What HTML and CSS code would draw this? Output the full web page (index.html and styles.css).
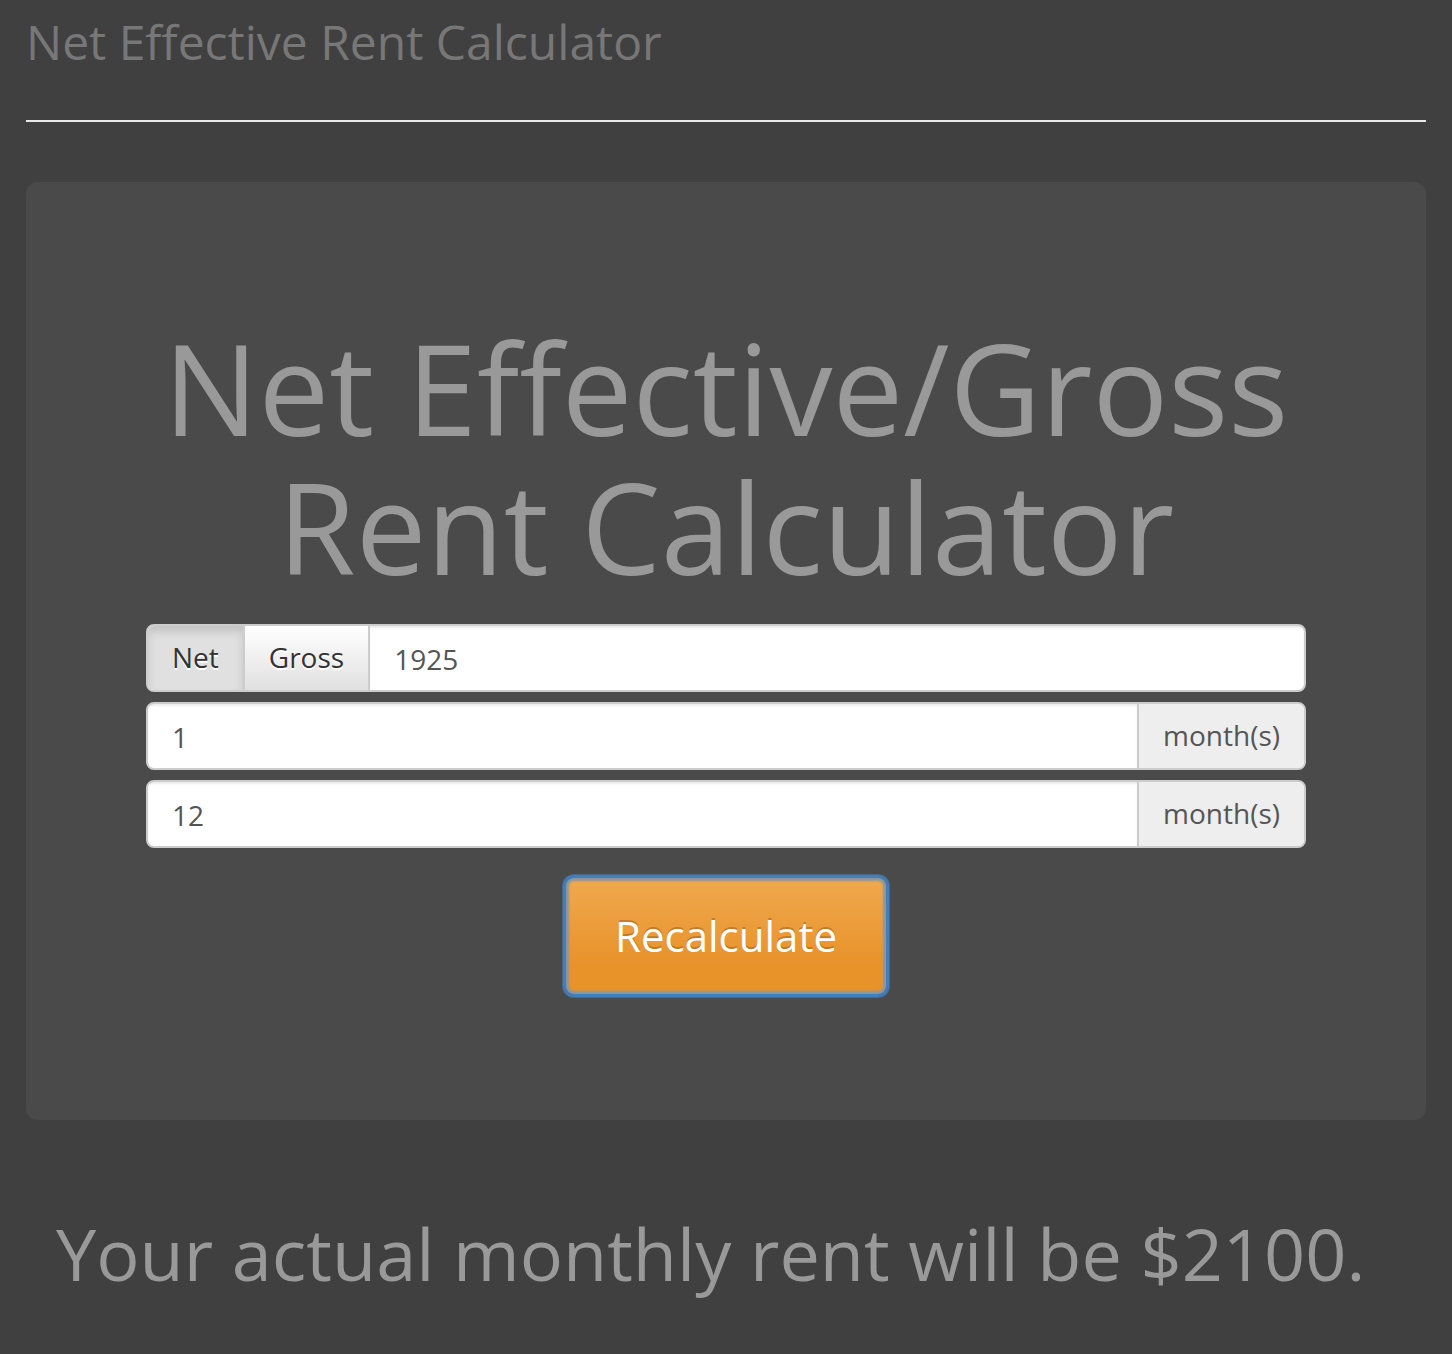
FILE: index.html
```html
<!DOCTYPE html>
<html lang="en">
<head>
<meta charset="utf-8">
<meta name="viewport" content="width=device-width, initial-scale=1">
<title>Net Effective Rent Calculator</title>
<link rel="stylesheet" href="styles.css">
</head>
<body>
<header class="masthead">
  <h3 class="brand">Net Effective Rent Calculator</h3>
</header>
<main>
  <form class="panel">
    <h1 class="title">Net Effective/Gross Rent Calculator</h1>
    <div class="fields">
      <div class="group">
        <button type="button" class="toggle active" aria-pressed="true">Net</button>
        <button type="button" class="toggle" aria-pressed="false">Gross</button>
        <input class="field" type="text" value="1925" aria-label="Monthly rent">
      </div>
      <div class="group">
        <input class="field" id="free" type="text" value="1">
        <label class="addon" for="free">month(s)</label>
      </div>
      <div class="group">
        <input class="field" id="term" type="text" value="12">
        <label class="addon" for="term">month(s)</label>
      </div>
    </div>
    <button type="button" class="submit">Recalculate</button>
  </form>
  <p class="result">Your actual monthly rent will be $2100.</p>
</main>
</body>
</html>
```
FILE: styles.css
```css
* {
  box-sizing: border-box;
}

body {
  margin: 0;
  padding: 0 26px;
  background: #404040;
  color: #999;
  font-family: "Open Sans", "Noto Sans", sans-serif;
  font-size: 28px;
}

.masthead {
  padding: 12px 0 48px;
  border-bottom: 2px solid #e8e8e8;
}

.brand {
  margin: 0;
  color: #777;
  font-size: 48px;
  font-weight: 400;
  line-height: 60px;
}

.panel {
  display: flex;
  flex-direction: column;
  align-items: center;
  margin: 60px 0;
  padding: 136px 120px 124px;
  border-radius: 12px;
  background: #4a4a4a;
}

.title {
  margin: 0 0 28px;
  font-size: 126px;
  font-weight: 400;
  line-height: 139px;
  text-align: center;
}

.fields {
  display: grid;
  gap: 10px;
  width: 100%;
  margin-bottom: 28px;
}

.group {
  display: flex;
  height: 68px;
  overflow: hidden;
  border: 2px solid #ccc;
  border-radius: 8px;
  background: #fff;
}

.toggle,
.field,
.addon {
  border: 0;
  color: #555;
  font: inherit;
}

.toggle {
  padding: 0 24px 2px;
  border-right: 2px solid #ccc;
  background: linear-gradient(#fff, #e0e0e0);
  color: #333;
  text-shadow: 0 2px 0 #fff;
}

.toggle.active {
  background: #e0e0e0;
  box-shadow: inset 0 6px 10px rgba(0, 0, 0, 0.125);
}

.field {
  flex: 1;
  min-width: 0;
  padding: 2px 24px 0;
  background: transparent;
  box-shadow: inset 0 2px 2px rgba(0, 0, 0, 0.075);
  outline: 0;
}

.addon {
  padding: 0 24px;
  border-left: 2px solid #ccc;
  background: #eee;
  line-height: 62px;
}

.submit {
  padding: 30px 49px;
  border: 2px solid #427fbd;
  border-radius: 10px;
  background: linear-gradient(#f0a94e, #e8922a 75%) padding-box;
  box-shadow:
    0 0 0 1px #427fbd,
    0 0 0 2px #46678a,
    inset 0 0 2px 3px #8a97a0;
  color: #fff;
  font-family: inherit;
  font-size: 42px;
  line-height: 56px;
  text-shadow: 0 -2px 0 rgba(0, 0, 0, 0.2);
}

.result {
  margin: 0;
  padding: 28px 30px;
  font-size: 72px;
  line-height: 90px;
}
```
